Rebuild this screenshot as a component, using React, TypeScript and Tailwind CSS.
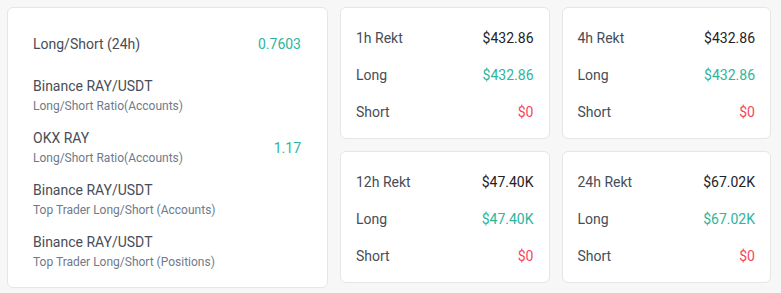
import React from "react";

const font = { fontFamily: '"Roboto", "Noto Sans", sans-serif' };

function LeftRow({ title, sub, value, className = "" }: { title: string; sub?: string; value?: string; className?: string }) {
  return (
    <div className={`flex items-center justify-between ${className}`}>
      <div className="flex flex-col">
        <span className="text-[14px] leading-[20px] text-[#474d57]">{title}</span>
        {sub && <span className="text-[12px] leading-[20px] text-[#707a8a]">{sub}</span>}
      </div>
      {value && <span className="text-[14px] leading-[20px] text-[#2db59d]">{value}</span>}
    </div>
  );
}

function RektCard({ label, total, long }: { label: string; total: string; long: string }) {
  return (
    <div className="bg-white border border-[#e6e6e6] rounded-[6px] h-[132px] px-[15px] pt-[20px] flex flex-col gap-[17px]">
      <div className="flex justify-between text-[14px] leading-[20px]">
        <span className="text-[#474d57]">{label}</span>
        <span className="text-[#1e2329]">{total}</span>
      </div>
      <div className="flex justify-between text-[14px] leading-[20px]">
        <span className="text-[#474d57]">Long</span>
        <span className="text-[#2db59d]">{long}</span>
      </div>
      <div className="flex justify-between text-[14px] leading-[20px]">
        <span className="text-[#474d57]">Short</span>
        <span className="text-[#f6465d]">$0</span>
      </div>
    </div>
  );
}

export default function App() {
  return (
    <div className="w-[781px] h-[293px] bg-[#f7f7f7] pt-[7px] pl-[7px] pr-[10px] flex gap-[12px]" style={font}>
      <div className="w-[321px] h-[281px] bg-white border border-[#e6e6e6] rounded-[6px] pl-[25px] pr-[26px] pt-[26px] flex flex-col">
        <LeftRow title="Long/Short (24h)" value="0.7603" className="mb-[22px]" />
        <LeftRow title="Binance RAY/USDT" sub="Long/Short Ratio(Accounts)" className="mb-[12px]" />
        <LeftRow title="OKX RAY" sub="Long/Short Ratio(Accounts)" value="1.17" className="mb-[12px]" />
        <LeftRow title="Binance RAY/USDT" sub="Top Trader Long/Short (Accounts)" className="mb-[12px]" />
        <LeftRow title="Binance RAY/USDT" sub="Top Trader Long/Short (Positions)" />
      </div>
      <div className="flex-1 grid grid-cols-2 gap-[12px] content-start">
        <RektCard label="1h Rekt" total="$432.86" long="$432.86" />
        <RektCard label="4h Rekt" total="$432.86" long="$432.86" />
        <RektCard label="12h Rekt" total="$47.40K" long="$47.40K" />
        <RektCard label="24h Rekt" total="$67.02K" long="$67.02K" />
      </div>
    </div>
  );
}
